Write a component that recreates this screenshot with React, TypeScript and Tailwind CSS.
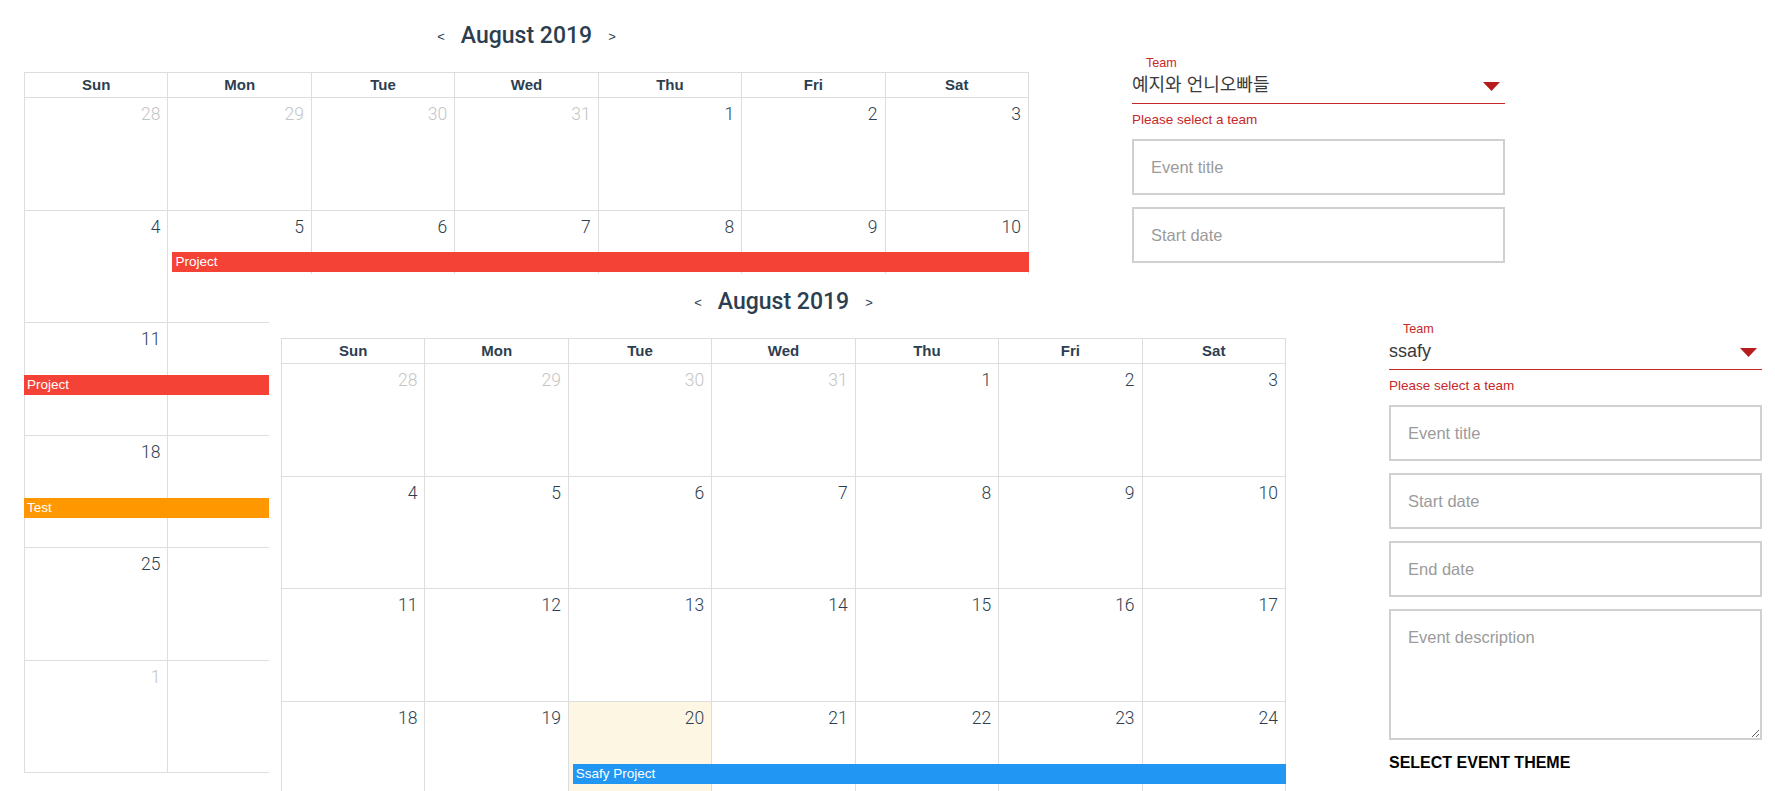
import React from "react";

type Bar = {
  row: number;
  top: number;
  start: number;
  span: number;
  inset: boolean;
  color: string;
  label: string;
};

const weeks: number[][] = [
  [28, 29, 30, 31, 1, 2, 3],
  [4, 5, 6, 7, 8, 9, 10],
  [11, 12, 13, 14, 15, 16, 17],
  [18, 19, 20, 21, 22, 23, 24],
  [25, 26, 27, 28, 29, 30, 31],
  [1, 2, 3, 4, 5, 6, 7],
];

const dayNames = ["Sun", "Mon", "Tue", "Wed", "Thu", "Fri", "Sat"];

function isOther(r: number, c: number) {
  return (r === 0 && c < 4) || r === 5;
}

function Calendar({ bars, rows }: { bars: Bar[]; rows: number }) {
  return (
    <div className="pl-[12px] font-['Liberation_Sans',sans-serif] text-[#2c3e50]">
      <div className="flex h-[56px] w-[1005px] items-center justify-center gap-[16px]">
        <span className="pt-[2px] text-[13px]">&lt;</span>
        <span className="font-['Roboto',sans-serif] text-[23px] font-medium leading-[30px]">August 2019</span>
        <span className="pt-[2px] text-[13px]">&gt;</span>
      </div>
      <div className="mt-[8px] w-[1005px] border-l border-t border-[#dddddd]">
        <div className="grid grid-cols-7">
          {dayNames.map((d) => (
            <div
              key={d}
              className="flex h-[25px] items-center justify-center border-b border-r border-[#dddddd] text-[15px] font-bold"
            >
              <span>{d}</span>
            </div>
          ))}
        </div>
        {weeks.slice(0, rows).map((w, r) => (
          <div key={r} className="relative grid grid-cols-7">
            {w.map((n, c) => (
              <div
                key={c}
                className={
                  "flex h-[112.5px] items-start justify-end border-b border-r border-[#dddddd] pr-[7px] pt-[4px] " +
                  (r === 3 && c === 2 ? "bg-[#fcf6e3]" : "bg-white")
                }
              >
                <span
                  className={
                    "font-['Roboto',sans-serif] text-[17.5px] font-light leading-[24px] " +
                    (isOther(r, c) ? "text-[#c4c4c4]" : "text-[#2c3e50]")
                  }
                >
                  {n}
                </span>
              </div>
            ))}
            {bars
              .filter((b) => b.row === r)
              .map((b, i) => (
                <div
                  key={i}
                  className="absolute h-[20px] overflow-hidden whitespace-nowrap pl-[3px] text-[13.5px] leading-[20px] text-white"
                  style={{
                    top: b.top,
                    backgroundColor: b.color,
                    left: b.inset
                      ? `calc(${b.start} * 100% / 7 + 4px)`
                      : `calc(${b.start} * 100% / 7 - 1px)`,
                    width: b.inset
                      ? `calc(${b.span} * 100% / 7 - 4px)`
                      : `calc(${b.span} * 100% / 7 + 1px)`,
                  }}
                >
                  {b.label}
                </div>
              ))}
          </div>
        ))}
      </div>
    </div>
  );
}

function EventForm({ team, full }: { team: string; full: boolean }) {
  const box =
    "block h-[56px] w-full border-2 border-[#d0d0d0] bg-white px-[17px] text-[16.5px] text-[#333] outline-none placeholder:text-[#9b9b9b]";
  return (
    <div className="ml-[103px] w-[373px] pt-[47px] font-['Liberation_Sans','Noto_Sans_CJK_KR',sans-serif]">
      <div className="pl-[14px] text-[12.6px] leading-[16px] text-[#c62828]">Team</div>
      <div className="mt-[2px] flex h-[31px] items-start justify-between border-b border-[#c62828]">
        <span className="text-[18px] leading-[24px] text-[#3a3a3a]">{team}</span>
        <svg className="mr-[5px] mt-[9px] h-[9px] w-[17px]" viewBox="0 0 17 9">
          <polygon points="0,0 17,0 8.5,9" fill="#b71c1c" />
        </svg>
      </div>
      <div className="mt-[8px] text-[13.5px] leading-[16px] text-[#c62828]">Please select a team</div>
      <div className="mt-[11px] flex flex-col gap-[12px]">
        <input className={box} placeholder="Event title" readOnly />
        <input className={box} placeholder="Start date" readOnly />
        {full && <input className={box} placeholder="End date" readOnly />}
        {full && (
          <textarea
            className="block h-[131px] w-full border-2 border-[#d0d0d0] bg-white px-[17px] pt-[17px] text-[16.5px] leading-[19px] text-[#333] outline-none placeholder:text-[#9b9b9b]"
            placeholder="Event description"
            readOnly
          />
        )}
      </div>
      {full && (
        <div className="mt-[13px] text-[16px] font-bold leading-[20px] text-black">SELECT EVENT THEME</div>
      )}
    </div>
  );
}

function Screen({ team, bars, full, rows }: { team: string; bars: Bar[]; full: boolean; rows: number }) {
  return (
    <div className="flex items-start">
      <Calendar bars={bars} rows={rows} />
      <EventForm team={team} full={full} />
    </div>
  );
}

export default function App() {
  const bars1: Bar[] = [
    { row: 1, top: 41.5, start: 1, span: 6, inset: true, color: "#f44336", label: "Project" },
    { row: 2, top: 52, start: 0, span: 4, inset: false, color: "#f44336", label: "Project" },
    { row: 3, top: 62.5, start: 0, span: 3, inset: false, color: "#ff9800", label: "Test" },
  ];
  const bars2: Bar[] = [
    { row: 3, top: 62.5, start: 2, span: 5, inset: true, color: "#2196f3", label: "Ssafy Project" },
  ];
  return (
    <div className="relative h-[791px] w-full overflow-hidden bg-white">
      <div className="pl-[12px] pt-[8px]">
        <Screen team="예지와 언니오빠들" bars={bars1} full={false} rows={6} />
      </div>
      <div className="absolute bottom-0 left-[269px] right-0 top-[274px] overflow-hidden bg-white">
        <Screen team="ssafy" bars={bars2} full={true} rows={4} />
      </div>
    </div>
  );
}
